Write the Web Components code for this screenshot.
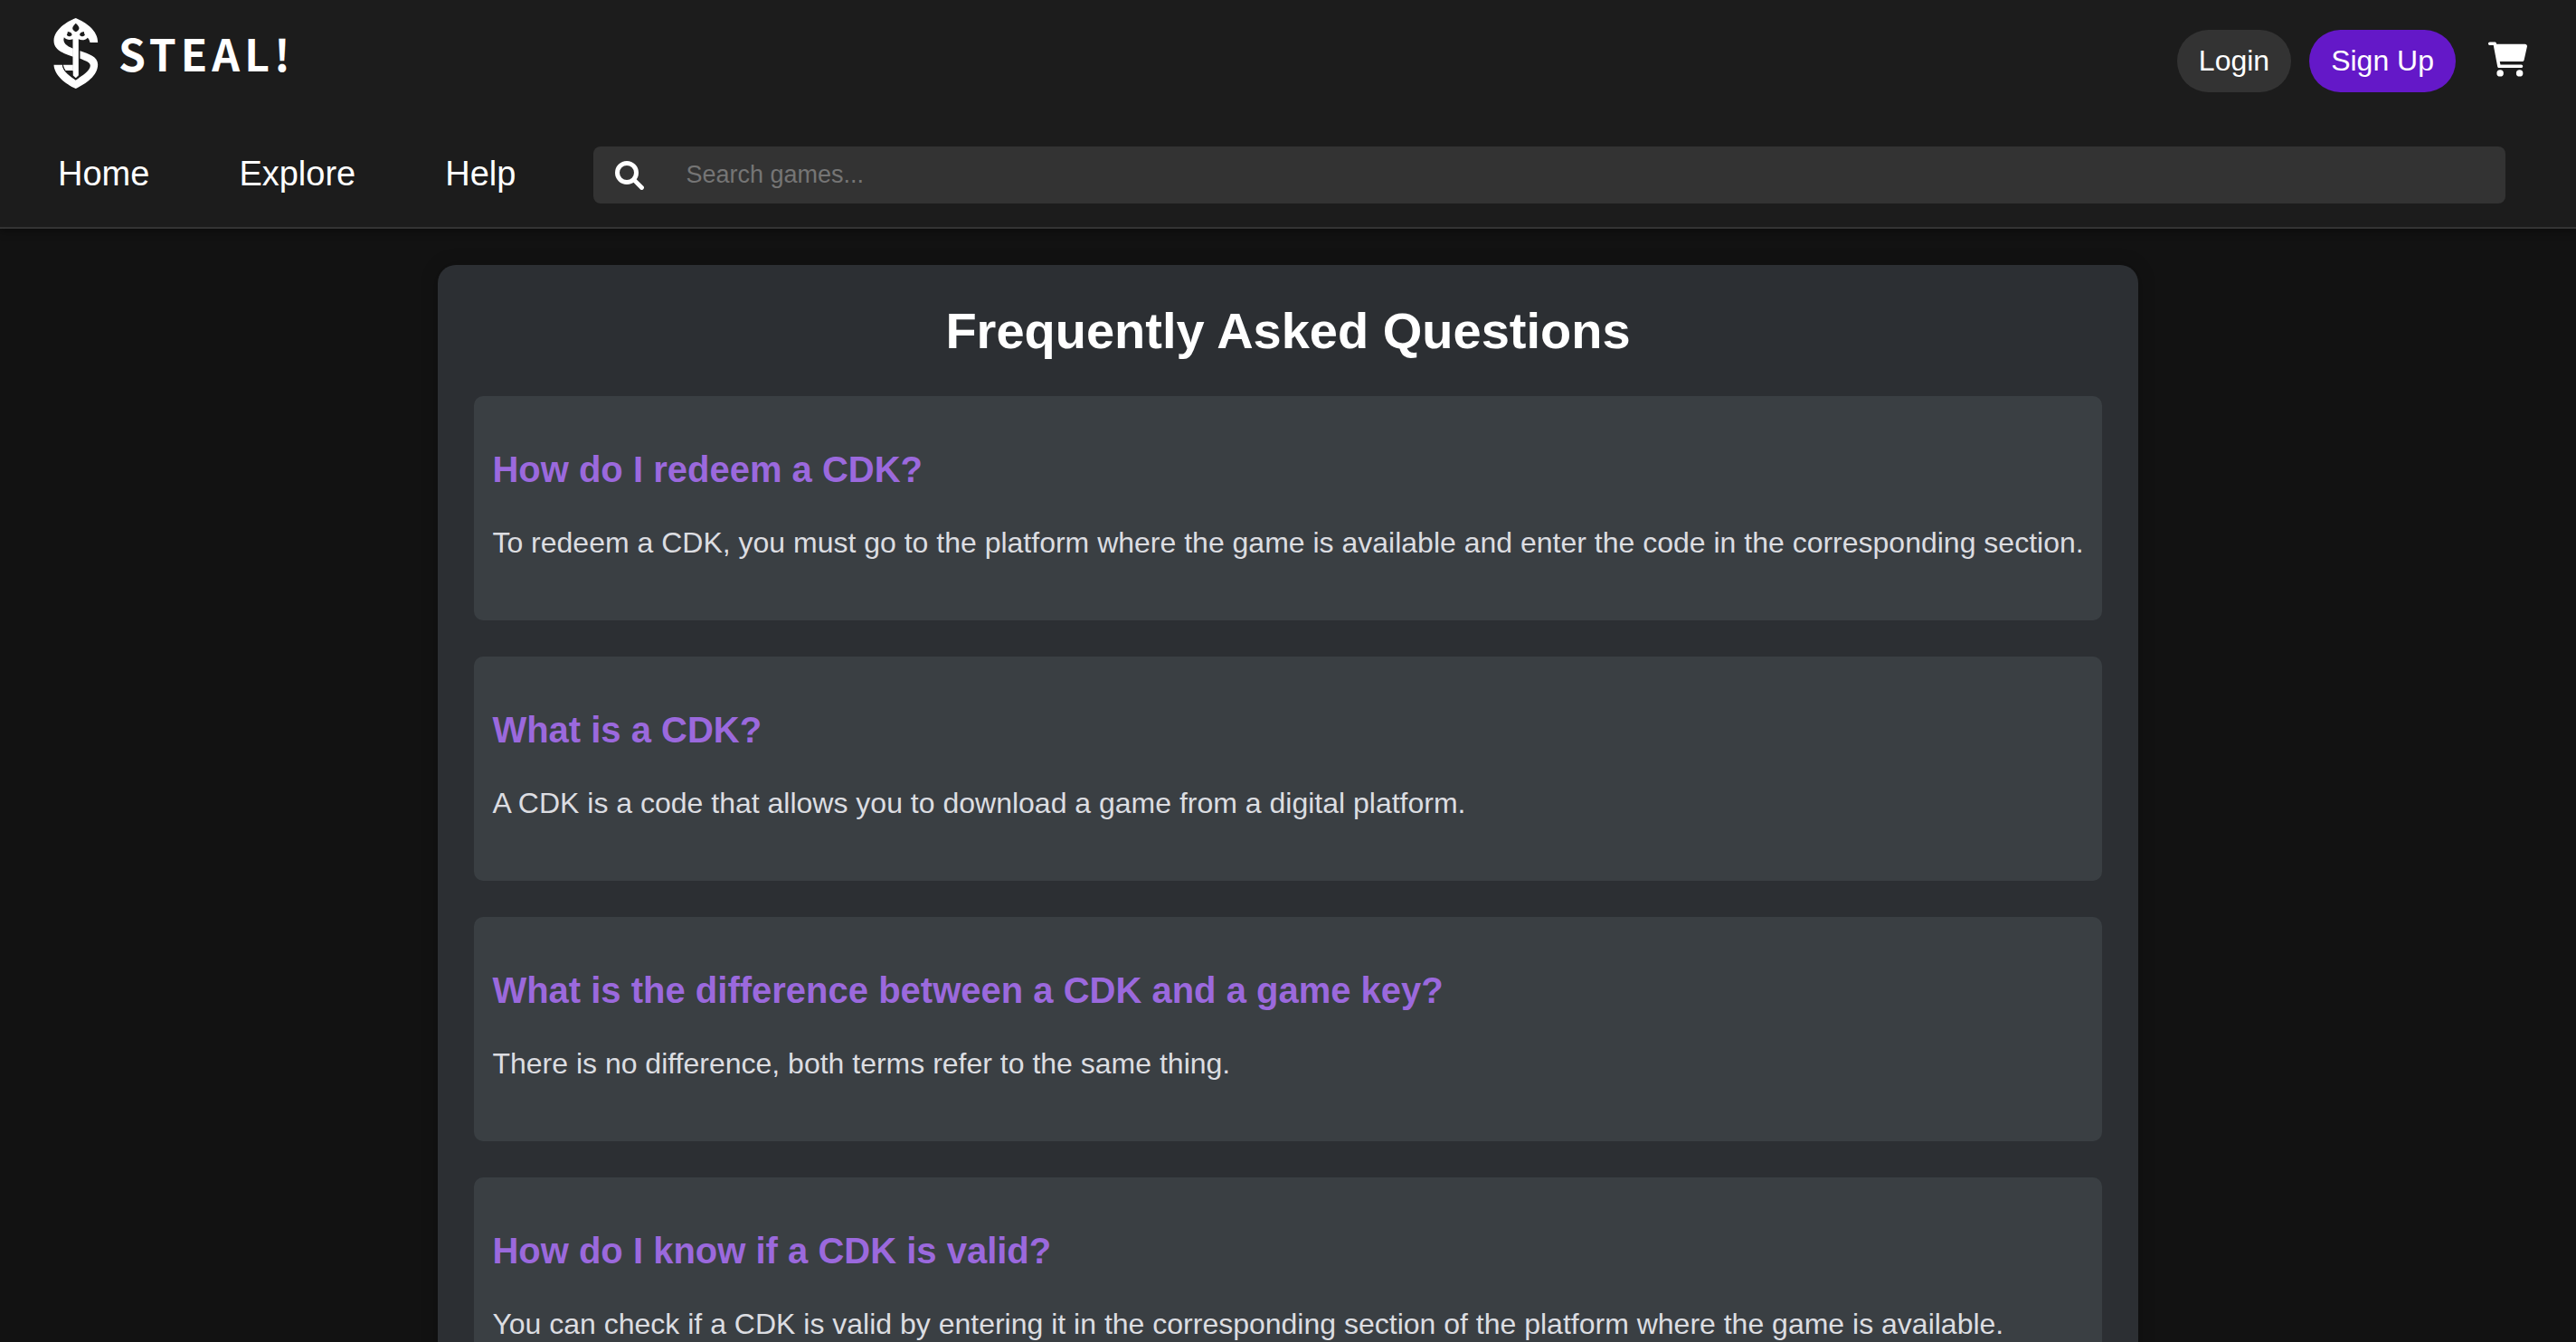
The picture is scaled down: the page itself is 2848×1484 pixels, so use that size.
<!DOCTYPE html>
<html lang="en">
<head>
<meta charset="utf-8">
<title>STEAL! - Help</title>
<style>
html{background:#121212}
body{margin:0;background:#121212;color:#fff;font-family:"Liberation Sans",Arial,sans-serif;font-size:32px;overflow-x:hidden}
</style>
</head>
<body>
<steal-header></steal-header>
<faq-panel>
<span slot="title">Frequently Asked Questions</span>
<faq-item><span slot="question">How do I redeem a CDK?</span>To redeem a CDK, you must go to the platform where the game is available and enter the code in the corresponding section.</faq-item>
<faq-item><span slot="question">What is a CDK?</span>A CDK is a code that allows you to download a game from a digital platform.</faq-item>
<faq-item><span slot="question">What is the difference between a CDK and a game key?</span>There is no difference, both terms refer to the same thing.</faq-item>
<faq-item><span slot="question">How do I know if a CDK is valid?</span>You can check if a CDK is valid by entering it in the corresponding section of the platform where the game is available.</faq-item>
</faq-panel>
<script>
function define(name, html){
  customElements.define(name, class extends HTMLElement{
    constructor(){
      super();
      this.attachShadow({mode:"open"}).innerHTML = html;
    }
  });
}

define("steal-logo", `
<style>
:host{display:block}
a{display:flex;align-items:center;gap:22px;color:#fff;text-decoration:none}
svg{display:block;width:50px;height:78px}
span{font:700 48px/72px "Noto Sans CJK JP","Noto Sans",sans-serif;letter-spacing:5px;padding-bottom:2px}
</style>
<a href="#" aria-label="STEAL!">
<svg viewBox="0 0 147 234" aria-hidden="true">
<g fill="#fff">
<path d="M73 0C105 14 146 40 146 81H120C119 74 116 69 112 65C104 74 92 74 82 70H64C52 74 42 73 34 64C28 82 42 93 64 101V128C30 116 0 106 0 74C2 38 42 12 73 0Z"/>
<path d="M87 109C116 119 146 128 146 154C146 192 106 218 73 234C38 218 2 190 0 155H28C30 170 42 182 73 205C96 190 120 174 121 158C121 145 103 141 87 134Z"/>
<path d="M31 155H64V174H39C34 168 31 162 31 155Z"/>
<path d="M63 60H82V190Q82 198 73 199Q63 198 63 190Z"/>
</g>
<g fill="#1c1c1c">
<path d="M73 17C89 31 86 39 73 46C60 39 57 31 73 17Z"/>
<path d="M46 45C56 46 61 51 60 57C52 64 43 60 43 55Q46 52 46 45Z"/>
<path d="M100 45C90 46 85 51 86 57C94 64 103 60 103 55Q100 52 100 45Z"/>
<path d="M28 155L31 155Q33 166 40 176H63V190L73 199L82 190V199L73 206L60 197C38 181 30 170 28 155Z"/>
</g>
</svg>
<span>STEAL!</span>
</a>`);

define("pill-button", `
<style>
:host{display:block}
button{display:block;margin:0;border:0;border-radius:40px;padding:16px 24px;background:var(--pill,#333);color:#fff;font:32px/37px "Liberation Sans",Arial,sans-serif;cursor:pointer}
</style>
<button type="button"><slot></slot></button>`);

define("cart-link", `
<style>
:host{display:block}
a{display:block;color:#fff}
svg{display:block;width:43px;height:39px}
</style>
<a href="#" aria-label="Cart"><svg viewBox="0 0 576 512" fill="currentColor"><path d="M0 24C0 10 10 0 24 0H96C108 0 118 8 120 19L122 32H544C565 32 580 50 575 70L530 268C527 280 518 288 506 288H171L180 336H488C502 336 512 346 512 360S502 384 488 384H160C148 384 139 376 137 365L77 48H24C10 48 0 38 0 24Z"/><circle cx="176" cy="462" r="50"/><circle cx="464" cy="462" r="50"/></svg></a>`);

define("nav-link", `
<style>
:host{display:block}
a{color:#fff;text-decoration:none;font-size:38px;line-height:44px}
</style>
<a href="#"><slot></slot></a>`);

define("game-search", `
<style>
:host{display:block}
form{display:flex;align-items:center;gap:40px;box-sizing:border-box;height:63px;padding:0 24px;border-radius:8px;background:#333}
label{display:block;flex:none}
svg{display:block;width:32px;height:32px}
input{flex:1;min-width:0;margin:0;border:0;outline:0;padding:0 6px 2px;background:none;color:#fff;font:27px/32px "Liberation Sans",Arial,sans-serif}
input::placeholder{color:#757575;opacity:1}
</style>
<form>
<label for="q"><svg viewBox="0 0 512 512" role="img" aria-label="Search"><g fill="none" stroke="#fff"><circle cx="208" cy="208" r="168" stroke-width="80"/><path d="M338 338L472 472" stroke-width="78" stroke-linecap="round"/></g></svg></label>
<input id="q" type="text" placeholder="Search games...">
</form>`);

define("steal-header", `
<style>
:host{display:block;position:relative;background:#1c1c1c;border-bottom:2px solid #333;box-shadow:0 4px 8px rgba(0,0,0,.3)}
.top{display:flex;align-items:center;justify-content:space-between;padding:20px 54px 0 59px;height:98px;box-sizing:border-box}
.actions{display:flex;align-items:center;gap:20px;padding-top:16px}
cart-link{margin:0 0 4px 16px}
.bottom{display:flex;align-items:center;padding:64px 78px 26px 64px}
nav{display:flex;gap:99px;margin-right:86px;padding-bottom:4px}
game-search{flex:1}
</style>
<div class="top">
<steal-logo></steal-logo>
<div class="actions">
<pill-button>Login</pill-button>
<pill-button style="--pill:#6418c8">Sign Up</pill-button>
<cart-link></cart-link>
</div>
</div>
<div class="bottom">
<nav><nav-link>Home</nav-link><nav-link>Explore</nav-link><nav-link>Help</nav-link></nav>
<game-search></game-search>
</div>`);

define("faq-panel", `
<style>
:host{display:block;box-sizing:border-box;width:fit-content;margin:40px auto;padding:40px;border-radius:20px;background:#2c2f33;box-shadow:0 0 20px rgba(0,0,0,.2)}
h1{margin:0 0 40px;text-align:center;font-size:56px;line-height:65px}
.list{display:flex;flex-direction:column;gap:40px}
</style>
<h1><slot name="title"></slot></h1>
<div class="list"><slot></slot></div>`);

define("faq-item", `
<style>
:host{display:block;padding:59px 20px 67px;border-radius:10px;background:#3a3f43}
h3{margin:0 0 40px;color:#9b69dd;font-size:40px;line-height:45px}
p{margin:0;color:#dcdde1;font-size:32px;line-height:37px}
</style>
<h3><slot name="question"></slot></h3>
<p><slot></slot></p>`);
</script>
</body>
</html>
